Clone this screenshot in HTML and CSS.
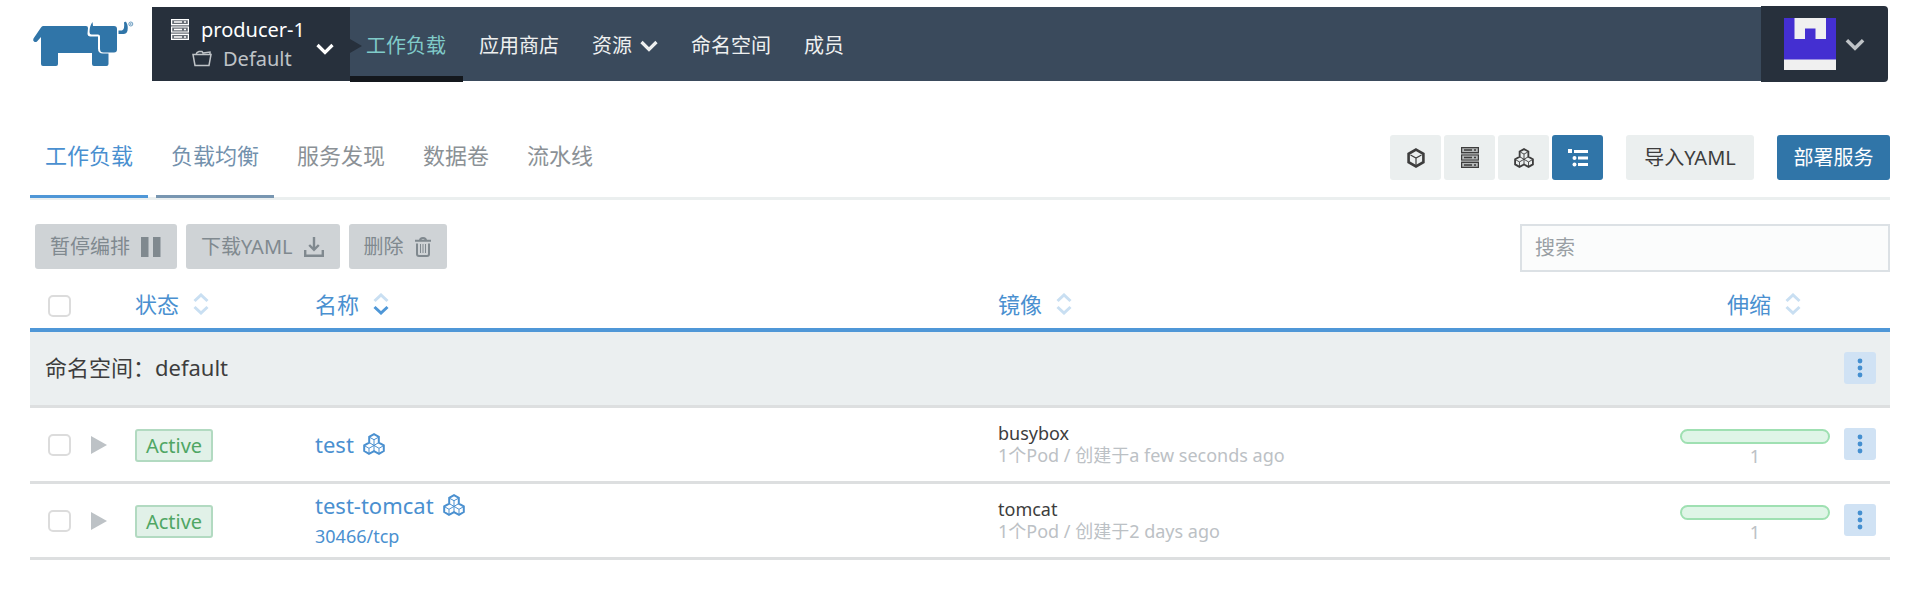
FILE: index.html
```html
<!DOCTYPE html>
<html lang="zh-CN">
<head>
<meta charset="utf-8">
<title>工作负载</title>
<link rel="stylesheet" href="styles.css">
</head>
<body>
<svg class="sprite" aria-hidden="true">
  <symbol id="chevron" viewBox="0 0 18 12"><path d="M1.5 2l7.500 7.500L16.500 2" fill="none" stroke="currentColor" stroke-width="3.200"/></symbol>
  <symbol id="server" viewBox="0 0 18 21">
    <path d="M0 0h18v21H0z" fill="currentColor" opacity=".3"/>
    <g fill="none" stroke="currentColor" stroke-width="1.200"><path d="M.6.6h16.800v5H.6zM.6 8h16.800v5H.6zM.6 15.400h16.800v5H.6z"/><path d="M3 3.100h8M3 10.500h8M3 17.900h8M13 3.100h2M13 10.500h2M13 17.900h2" stroke-width="1.500"/></g>
  </symbol>
  <symbol id="folder" viewBox="0 0 20 17"><path d="M3 15.500L1 4.500h18l-2 11zM4 4.500L5 2.500l2-1h3l1 1.500 7-1v2.500" fill="none" stroke="currentColor" stroke-width="1.500"/></symbol>
  <symbol id="cube" viewBox="0 0 18 20"><path d="M9 1.600l7.400 4.200v8.400L9 18.400l-7.400-4.200V5.800z" fill="none" stroke="currentColor" stroke-width="2.600"/><path d="M3.500 7L9 10l5.500-3M9 10v7" fill="none" stroke="currentColor" stroke-width="1.200"/></symbol>
  <symbol id="cubes" viewBox="0 0 22 22">
    <g fill="none" stroke="currentColor"><path stroke-width="2" d="M11 1.200l4.800 2.600v5.800l5 2.800v5.600L16 20.800l-5-2.600-5 2.600-4.800-2.800v-5.600l5-2.800V3.800z"/><path stroke-width="1" d="M7 4.500L11 6.700l4-2.200M11 6.700v11.500M6.200 9.600l4.800 2.800 4.800-2.800M2 13l4 2.300 5-2.900 5 2.900 4-2.300M6 15.300V20M16 15.300V20"/></g>
  </symbol>
  <symbol id="tree" viewBox="0 0 20 18"><path d="M0 0h4v4H0zM6 1h14v3H6zM10 7.500h10v3H10zM10 14h10v3H10z" fill="currentColor"/><circle cx="6.500" cy="9" r="2" fill="currentColor"/><circle cx="6.500" cy="15.500" r="2" fill="currentColor"/></symbol>
  <symbol id="pause" viewBox="0 0 20 20"><path d="M0 0h7.500v20H0zM12 0h7.500v20H12z" fill="currentColor"/></symbol>
  <symbol id="download" viewBox="0 0 20 20"><path d="M10 0v12M5.200 8l4.800 4.800L14.800 8M1.200 13v5.800h17.600V13" fill="none" stroke="currentColor" stroke-width="2.400"/></symbol>
  <symbol id="trash" viewBox="0 0 16 20"><path d="M0 3.800h16M5 3.500q0-2.500 3-2.500t3 2.500M2 6.500v10.500q0 2 2 2h8q2 0 2-2V6.500" fill="none" stroke="currentColor" stroke-width="2"/><path d="M5.500 7v9M8 7v9M10.500 7v9" stroke="currentColor" stroke-width="1"/></symbol>
  <symbol id="sort" viewBox="0 0 16 22"><path class="sort-up" d="M1.500 8L8 2l6.500 6"/><path class="sort-down" d="M1.500 14L8 20l6.500-6"/></symbol>
  <symbol id="dots" viewBox="0 0 6 20"><g fill="currentColor"><circle cx="3" cy="3" r="2.400"/><circle cx="3" cy="10" r="2.400"/><circle cx="3" cy="17" r="2.400"/></g></symbol>
</svg>

<header class="header">
  <a class="logo" href="#" aria-label="Rancher">
    <svg width="102" height="46" viewBox="0 0 102 46">
      <g fill="#3075a8">
        <path d="M11 5H54q2 0 2 2l-.5 5.500q0 3 3 3H66v12q0 5 5 5h5.500V43q0 2-2 2H62q-2 0-2-2V32H26v11q0 2-2 2H11q-2 0-2-2V16l-4 4.500q-1.500 1-3 0t-.5-3L9 6.500Q9.800 5 11 5z"/>
        <path d="M60.500 1q-3 4-3 10 0 2.500 2 2.500H66q2 0 2 2V28q0 3.500 3.500 3.500H82q3 0 3-3V8q0-3-3-3H61z"/>
        <path d="M92 1.500q.5-1 2-.8 2.500 4 1.500 9-1 3.300-4 3.300H86.500V9.500H90q3-1.500 2-8z"/>
      </g>
      <circle cx="98.800" cy="3" r="2" fill="none" stroke="#3075a8" stroke-width=".7"/><circle cx="98.800" cy="3" r=".7" fill="#3075a8"/>
    </svg>
  </a>
  <button class="project" type="button">
    <span class="project-names">
      <span class="cluster"><svg width="18" height="21"><use href="#server"/></svg>producer-1</span>
      <span class="namespace"><svg width="20" height="17"><use href="#folder"/></svg>Default</span>
    </span>
    <svg class="project-caret" width="18" height="12"><use href="#chevron"/></svg>
  </button>
  <nav class="nav">
    <a class="nav-item nav-active" href="#">工作负载</a>
    <a class="nav-item" href="#">应用商店</a>
    <a class="nav-item" href="#">资源<svg width="18" height="12"><use href="#chevron"/></svg></a>
    <a class="nav-item" href="#">命名空间</a>
    <a class="nav-item" href="#">成员</a>
  </nav>
  <button class="user" type="button" aria-label="用户">
    <svg width="52" height="52" viewBox="0 0 52 52"><path d="M0 0h52v52H0z" fill="#f0f0f0"/><path d="M0 0h10.500v21h10.500V10.500h10.500V21H42V0h10v41.500H0z" fill="#442fd1"/></svg>
    <svg width="20" height="13"><use href="#chevron"/></svg>
  </button>
</header>

<main class="main">
  <div class="toolbar">
    <nav class="tabs">
      <a class="tab tab-active" href="#">工作负载</a>
      <a class="tab tab-hover" href="#">负载均衡</a>
      <a class="tab" href="#">服务发现</a>
      <a class="tab" href="#">数据卷</a>
      <a class="tab" href="#">流水线</a>
    </nav>
    <div class="actions">
      <div class="views">
        <button class="view" type="button" aria-label="容器"><svg width="18" height="20"><use href="#cube"/></svg></button>
        <button class="view" type="button" aria-label="节点"><svg width="18" height="21"><use href="#server"/></svg></button>
        <button class="view" type="button" aria-label="服务"><svg width="20" height="20"><use href="#cubes"/></svg></button>
        <button class="view view-on" type="button" aria-label="分组"><svg width="20" height="18"><use href="#tree"/></svg></button>
      </div>
      <button class="btn btn-import" type="button">导入YAML</button>
      <button class="btn btn-primary" type="button">部署服务</button>
    </div>
  </div>

  <div class="bulk">
    <div class="bulk-buttons">
      <button class="bulk-btn" type="button" disabled>暂停编排<svg width="20" height="20"><use href="#pause"/></svg></button>
      <button class="bulk-btn" type="button" disabled>下载YAML<svg width="20" height="20"><use href="#download"/></svg></button>
      <button class="bulk-btn" type="button" disabled>删除<svg width="16" height="20"><use href="#trash"/></svg></button>
    </div>
    <input class="search" type="search" placeholder="搜索" aria-label="搜索">
  </div>

  <table class="grid">
    <colgroup><col class="c-check"><col class="c-expand"><col class="c-state"><col class="c-name"><col><col class="c-scale"><col class="c-menu"></colgroup>
    <thead>
      <tr>
        <th class="check"><input type="checkbox" aria-label="全选"></th>
        <th></th>
        <th><a class="sort" href="#">状态<svg width="16" height="22"><use href="#sort"/></svg></a></th>
        <th><a class="sort sort-desc" href="#">名称<svg width="16" height="22"><use href="#sort"/></svg></a></th>
        <th><a class="sort" href="#">镜像<svg width="16" height="22"><use href="#sort"/></svg></a></th>
        <th class="scale-head"><a class="sort" href="#">伸缩<svg width="16" height="22"><use href="#sort"/></svg></a></th>
        <th></th>
      </tr>
    </thead>
    <tbody>
      <tr class="group">
        <td class="group-name" colspan="6">命名空间：default</td>
        <td><button class="menu" type="button" aria-label="操作"><svg width="6" height="20"><use href="#dots"/></svg></button></td>
      </tr>
      <tr>
        <td class="check"><input type="checkbox" aria-label="test"></td>
        <td><button class="expand" type="button" aria-label="展开"></button></td>
        <td><span class="badge">Active</span></td>
        <td><a class="name" href="#">test<svg width="22" height="22"><use href="#cubes"/></svg></a></td>
        <td><div class="image">busybox</div><div class="meta">1个Pod / 创建于a few seconds ago</div></td>
        <td class="scale"><div class="bar"></div><div class="count">1</div></td>
        <td><button class="menu" type="button" aria-label="操作"><svg width="6" height="20"><use href="#dots"/></svg></button></td>
      </tr>
      <tr>
        <td class="check"><input type="checkbox" aria-label="test-tomcat"></td>
        <td><button class="expand" type="button" aria-label="展开"></button></td>
        <td><span class="badge">Active</span></td>
        <td><a class="name" href="#">test-tomcat<svg width="22" height="22"><use href="#cubes"/></svg></a><a class="port" href="#">30466/tcp</a></td>
        <td><div class="image">tomcat</div><div class="meta">1个Pod / 创建于2 days ago</div></td>
        <td class="scale"><div class="bar"></div><div class="count">1</div></td>
        <td><button class="menu" type="button" aria-label="操作"><svg width="6" height="20"><use href="#dots"/></svg></button></td>
      </tr>
    </tbody>
  </table>
</main>
</body>
</html>
```
FILE: styles.css
```css
* { box-sizing: border-box; }
body {
  margin: 0;
  background: #fff;
  color: #3d3d3d;
  font-family: "Noto Sans", "Noto Sans CJK SC", sans-serif;
  font-size: 20px;
  line-height: 24px;
}
a { color: inherit; text-decoration: none; }
button, input { font: inherit; margin: 0; }
button { border: 0; padding: 0; color: inherit; background: none; }
svg { flex: none; display: block; }
.sprite { position: absolute; width: 0; height: 0; }

.header { display: flex; align-items: center; padding: 6px 20px 0 32px; }
.logo { width: 120px; }
.project {
  position: relative;
  display: flex; align-items: center; justify-content: space-between;
  width: 198px; height: 74px;
  padding: 0 16px 0 19px;
  background: #27303c; color: #fff;
}
.project::after {
  content: "";
  position: absolute; left: 100%; top: 32px;
  border: 7px solid transparent;
  border-left: 12px solid #27303c;
  border-right: 0;
}
.project-caret { margin-top: 10px; }
.project-names { display: flex; flex-direction: column; gap: 5px; }
.cluster { display: flex; align-items: center; gap: 12px; line-height: 24px; }
.namespace { display: flex; align-items: center; gap: 11px; padding-left: 21px; color: #bfc3c7; line-height: 24px; }
.nav { flex: 1; display: flex; gap: 1px; height: 74px; background: #3a4a5c; color: #eef0f0; }
.nav-item { display: flex; align-items: center; gap: 8px; padding: 3px 16px 0; }
.nav-active { position: relative; padding-right: 17px; margin-right: -1px; color: #80cbc9; }
.nav-active::after { content: ""; position: absolute; left: 0; right: 0; bottom: -1px; height: 6px; background: #14181d; }
.user {
  display: flex; align-items: center; justify-content: center; gap: 9px;
  width: 127px; height: 76px;
  border-radius: 0 4px 4px 0;
  background: #27303c; color: #bfc3c7;
}

.main { padding: 53px 18px 0 30px; }
.toolbar { display: flex; justify-content: space-between; height: 65px; border-bottom: 3px solid #ebefef; }
.tabs { display: flex; gap: 8px; font-size: 22px; color: #8b9196; }
.tab { height: 63px; padding: 7px 15px 0; line-height: 26px; border-bottom: 3px solid transparent; }
.tab-active { color: #4a90d0; border-color: #4f97d7; }
.tab-hover { color: #7391ad; border-color: #7896b1; }
.actions { display: flex; gap: 23px; align-items: flex-start; }
.views { display: flex; gap: 3px; }
.view { display: flex; align-items: center; justify-content: center; width: 51px; height: 45px; border-radius: 3px; background: #ebefef; color: #3d3d3d; }
.view-on { background: #3075a8; color: #fff; }
.btn { height: 45px; padding: 0 16px; border-radius: 3px; background: #ebefef; color: #3d3d3d; }
.btn-import { min-width: 128px; }
.btn-primary { min-width: 113px; background: #3075a8; color: #fff; }

.bulk { display: flex; justify-content: space-between; align-items: flex-start; padding: 24px 0 0 5px; }
.bulk-buttons { display: flex; gap: 9px; }
.bulk-btn { display: flex; align-items: center; gap: 11px; height: 45px; padding: 0 16px 0 15px; border-radius: 3px; background: #cfd3d6; color: #80898f; }
.search { width: 370px; height: 48px; padding: 0 13px 2px; border: 2px solid #dce1e5; border-radius: 0; background: #fbfcfc; color: #3d3d3d; outline: 0; appearance: none; }
.search::placeholder { color: #999fa4; opacity: 1; }

.grid { width: 100%; table-layout: fixed; border-collapse: collapse; }
.c-check { width: 55px; }
.c-expand { width: 50px; }
.c-state { width: 180px; }
.c-name { width: 683px; }
.c-scale { width: 150px; }
.c-menu { width: 60px; }
th, td { padding: 0; text-align: left; vertical-align: middle; font-weight: 400; }
thead tr { height: 58px; border-bottom: 4px solid #4f97d7; }
thead th { padding-top: 9px; }
tbody tr { height: 76px; border-bottom: 3px solid #dddfe0; }
.sort { display: inline-flex; align-items: center; gap: 14px; font-size: 22px; color: #4a90d0; }
.sort-up, .sort-down { fill: none; stroke: #c9dff2; stroke-width: 3; }
.sort-down { stroke: var(--sort-down, #c9dff2); }
.sort-desc { --sort-down: #4f97d7; }
.grid .scale-head { padding-left: 47px; }
.group { background: #ebeff0; }
.group-name { padding: 0 0 3px 15px; font-size: 22px; }
.check { padding-left: 18px; }
.check input { display: block; width: 23px; height: 22px; margin-top: 2px; appearance: none; border: 2px solid #dcdcdc; border-radius: 5px; background: #fff; }
.expand { display: block; margin: 2px 0 0 6px; border: 9px solid transparent; border-left: 16px solid #bdc2c6; border-right: 0; }
.badge { display: block; width: 78px; height: 33px; margin-top: 2px; border: 2px solid #b2dac1; border-radius: 3px; background: #e1f1e8; color: #50a664; line-height: 30px; text-align: center; }
.name { display: flex; align-items: center; gap: 9px; color: #4a90d0; font-size: 22px; line-height: 32px; }
.port { display: block; color: #4a90d0; font-size: 18px; line-height: 30px; }
.image { font-size: 18px; line-height: 22px; }
.meta { color: #bcc1c5; font-size: 18px; line-height: 22px; }
.scale { padding-top: 9px; }
.bar { height: 15px; border: 2px solid #9fe0b2; border-radius: 8px; background: #dff5e7; }
.count { color: #bcc1c5; font-size: 18px; line-height: 24px; text-align: center; }
.menu { display: flex; align-items: center; justify-content: center; width: 32px; height: 32px; margin-left: 14px; border-radius: 3px; background: #d0e2f4; color: #448fd0; }
```
